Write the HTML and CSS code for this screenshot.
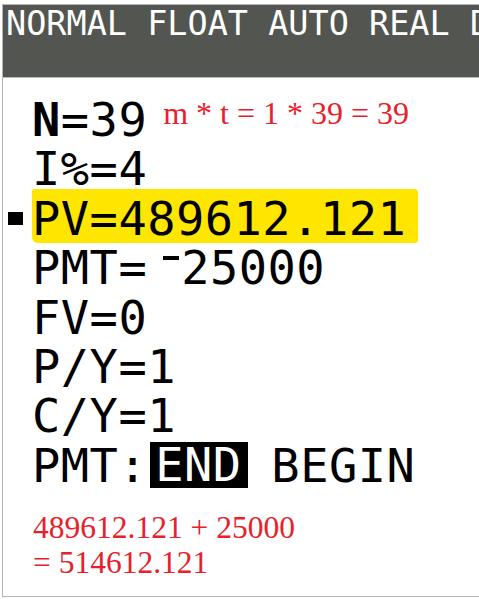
FILE: index.html
```html
<!DOCTYPE html>
<html>
<head>
<meta charset="utf-8">
<link rel="stylesheet" href="styles.css">
</head>
<body>
<div class="frame">
  <div class="status">NORMAL FLOAT AUTO REAL DEGREE MP</div>
  <div class="lines">
    <div class="row"><span class="mark"></span><span class="txt"><b class="bold">N</b>=39<span class="note">m * t = 1 * 39 = 39</span></span></div>
    <div class="row"><span class="mark"></span><span class="txt">I%=4</span></div>
    <div class="row"><span class="mark"><i class="bullet"></i></span><span class="txt hl">PV=489612.121</span></div>
    <div class="row"><span class="mark"></span><span class="txt">PMT=<span class="neg"></span>25000</span></div>
    <div class="row"><span class="mark"></span><span class="txt">FV=0</span></div>
    <div class="row"><span class="mark"></span><span class="txt">P/Y=1</span></div>
    <div class="row"><span class="mark"></span><span class="txt">C/Y=1</span></div>
    <div class="row"><span class="mark"></span><span class="txt">PMT:<span class="sel">END</span> BEGIN</span></div>
  </div>
  <div class="calc">
    <div>489612.121 + 25000</div>
    <div>= 514612.121</div>
  </div>
</div>
</body>
</html>
```

FILE: styles.css
```css
html, body {
  margin: 0;
  padding: 0;
  background: #ffffff;
  overflow: hidden;
}
body {
  width: 479px;
  height: 599px;
}
.frame {
  margin: 4px 0 0 2px;
  height: 591px;
  border: 1px solid #b4b4b4;
  border-right: none;
  background: #ffffff;
  overflow: hidden;
}
.status {
  height: 72px;
  background: #535551;
  border-bottom: 1px solid #b8b8b8;
  color: #ffffff;
  font-family: "DejaVu Sans Mono", monospace;
  font-size: 33.5px;
  line-height: 38px;
  padding-left: 3px;
  white-space: pre;
  overflow: hidden;
}
.lines {
  padding-top: 17px;
  font-family: "DejaVu Sans Mono", monospace;
  font-size: 47px;
  letter-spacing: 0.5px;
  color: #000000;
}
.row {
  display: flex;
  height: 49.4px;
  line-height: 49.4px;
  white-space: pre;
}
.mark {
  width: 29px;
  flex: none;
  display: flex;
}
.bullet {
  display: block;
  width: 15px;
  height: 13px;
  margin: 18px 0 0 5px;
  background: #000;
}
.txt {
  white-space: pre;
}
.bold {
  font-weight: bold;
}
.hl {
  background: #ffe600;
  margin-top: -5px;
  padding: 5px 12px 0 0;
  height: 49px;
  border-radius: 2px 4px 3px 6px;
}
.neg {
  display: inline-block;
  width: 34px;
  height: 10px;
  position: relative;
}
.neg::after {
  content: "";
  position: absolute;
  left: 16px;
  width: 16px;
  top: -18px;
  height: 4px;
  background: #000;
}
.sel {
  display: inline-block;
  background: #000;
  color: #fff;
  line-height: 46px;
  height: 46px;
  padding: 0 6px 0 5px;
  margin: 0 -5px 0 3px;
  vertical-align: 1px;
}
.note {
  font-family: "Liberation Serif", "Times New Roman", serif;
  font-size: 32px;
  line-height: 31px;
  letter-spacing: 0;
  color: #e8202a;
  margin-left: 16px;
  vertical-align: 12px;
}
.calc {
  margin-top: 20px;
  padding-left: 30px;
  font-family: "Liberation Serif", "Times New Roman", serif;
  font-size: 31.5px;
  line-height: 35px;
  color: #e8202a;
}
```
